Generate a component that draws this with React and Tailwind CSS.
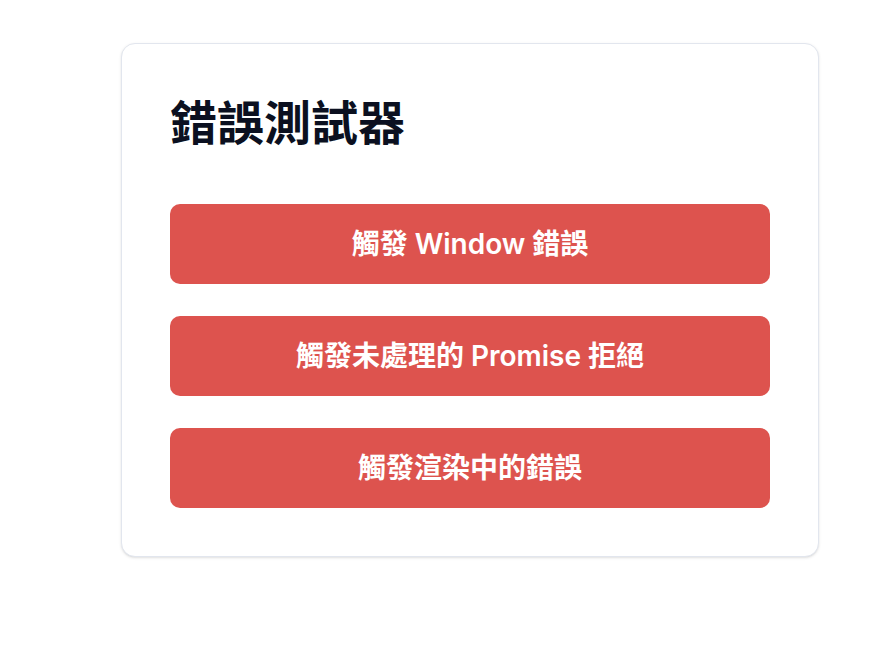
import React from "react";

const BUTTONS = ["觸發 Window 錯誤", "觸發未處理的 Promise 拒絕", "觸發渲染中的錯誤"];

export default function App() {
  return (
    <div
      className="min-h-[654px] w-full bg-white pl-[121px] pt-[43px]"
      style={{ fontFamily: 'Inter, "Noto Sans CJK TC", sans-serif' }}
    >
      <div className="w-[698px] rounded-[14px] border border-[#e2e6ee] bg-white p-12 shadow-sm">
        <h1 className="mt-[5px] mb-[55px] text-[47px] font-bold leading-[52px] text-[#0b1020]">
          錯誤測試器
        </h1>
        <div className="flex flex-col gap-8">
          {BUTTONS.map((label) => (
            <button
              key={label}
              className="flex h-20 w-full items-center justify-center rounded-[10px] bg-[#dd534e] text-[28px] font-semibold text-white"
            >
              {label}
            </button>
          ))}
        </div>
      </div>
    </div>
  );
}
